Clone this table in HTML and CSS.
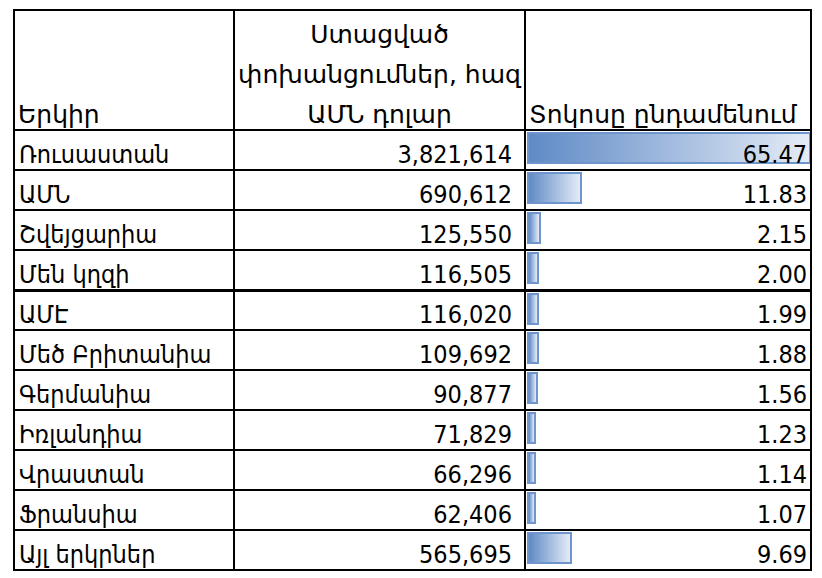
FILE: index.html
```html
<!DOCTYPE html>
<html lang="hy">
<head>
<meta charset="utf-8">
<link rel="stylesheet" href="styles.css">
</head>
<body>
<table class="grid">
  <colgroup>
    <col class="c1"><col class="c2"><col class="c3">
  </colgroup>
  <thead>
    <tr class="head">
      <th class="h-left"><div class="hin">Երկիր</div></th>
      <th class="h-mid"><div class="hin">Ստացված<br>փոխանցումներ, հազ<br>ԱՄՆ դոլար</div></th>
      <th class="h-left"><div class="hin">Տոկոսը ընդամենում</div></th>
    </tr>
  </thead>
  <tbody>
    <tr><td class="name">Ռուսաստան</td><td class="num">3,821,614</td><td class="pct"><span class="bar" style="width:280px"></span><span class="val">65.47</span></td></tr>
    <tr><td class="name">ԱՄՆ</td><td class="num">690,612</td><td class="pct"><span class="bar" style="width:51px"></span><span class="val">11.83</span></td></tr>
    <tr><td class="name">Շվեյցարիա</td><td class="num">125,550</td><td class="pct"><span class="bar" style="width:10px"></span><span class="val">2.15</span></td></tr>
    <tr><td class="name">Մեն կղզի</td><td class="num">116,505</td><td class="pct"><span class="bar" style="width:8px"></span><span class="val">2.00</span></td></tr>
    <tr class="thick"><td class="name">ԱՄԷ</td><td class="num">116,020</td><td class="pct"><span class="bar" style="width:8px"></span><span class="val">1.99</span></td></tr>
    <tr><td class="name">Մեծ Բրիտանիա</td><td class="num">109,692</td><td class="pct"><span class="bar" style="width:8px"></span><span class="val">1.88</span></td></tr>
    <tr><td class="name">Գերմանիա</td><td class="num">90,877</td><td class="pct"><span class="bar" style="width:7px"></span><span class="val">1.56</span></td></tr>
    <tr><td class="name">Իռլանդիա</td><td class="num">71,829</td><td class="pct"><span class="bar" style="width:5px"></span><span class="val">1.23</span></td></tr>
    <tr><td class="name">Վրաստան</td><td class="num">66,296</td><td class="pct"><span class="bar" style="width:5px"></span><span class="val">1.14</span></td></tr>
    <tr><td class="name">Ֆրանսիա</td><td class="num">62,406</td><td class="pct"><span class="bar" style="width:5px"></span><span class="val">1.07</span></td></tr>
    <tr><td class="name">Այլ երկրներ</td><td class="num">565,695</td><td class="pct"><span class="bar" style="width:41px"></span><span class="val">9.69</span></td></tr>
  </tbody>
</table>
</body>
</html>
```

FILE: styles.css
```css
html, body {
  margin: 0;
  padding: 0;
  background: #fff;
}
body {
  padding: 9px 0 0 13px;
  font-family: "DejaVu Sans Condensed", "DejaVu Sans", sans-serif;
  color: #000;
}
.grid {
  border-collapse: collapse;
  table-layout: fixed;
  width: 799px;
}
.c1 { width: 220px; }
.c2 { width: 291px; }
.c3 { width: 286px; }
.grid th,
.grid td {
  border: 2px solid #000;
  padding: 0;
  vertical-align: bottom;
  white-space: nowrap;
  overflow: hidden;
}
.head th {
  height: 118px;
  font-family: "DejaVu Sans", sans-serif;
  font-weight: normal;
  font-size: 25px;
  line-height: 40px;
}
.hin {
  margin-bottom: -6px;
}
.grid .h-left {
  text-align: left;
  padding-left: 3px;
}
.grid .h-mid {
  text-align: center;
}
.grid td {
  height: 38px;
  font-size: 25px;
  line-height: 29px;
}
.grid .thick td {
  border-top-width: 3px;
  height: 37px;
}
.grid .name {
  padding-left: 4px;
}
.grid .num {
  text-align: right;
  padding-right: 12px;
}
.grid .pct {
  position: relative;
  text-align: right;
  padding-right: 3px;
}
.bar {
  position: absolute;
  left: 1px;
  top: 1px;
  height: 28px;
  border: 2px solid #6f96cc;
  background: linear-gradient(to right, #5f8ac6, #e4ebf6);
}
.val {
  position: relative;
}
```
